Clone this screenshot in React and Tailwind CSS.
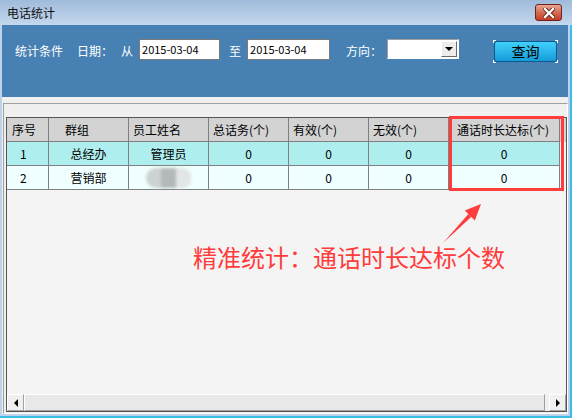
import React from 'react';

const cols = [
  { w: 'w-[42px]', title: '序号', hp: 'pl-[5px]' },
  { w: 'w-[80px]', title: '群组', hp: 'pl-[16px]' },
  { w: 'w-[80px]', title: '员工姓名', hp: 'pl-[4px]' },
  { w: 'w-[80px]', title: '总话务(个)', hp: 'pl-[4px]' },
  { w: 'w-[80px]', title: '有效(个)', hp: 'pl-[4px]' },
  { w: 'w-[80px]', title: '无效(个)', hp: 'pl-[4px]' },
  { w: 'w-[111px]', title: '通话时长达标(个)', hp: 'pl-[8px]' },
];

const rows = [
  { bg: 'bg-[#afeeee]', cells: ['1', '总经办', '管理员', '0', '0', '0', '0'] },
  { bg: 'bg-[#f0ffff]', cells: ['2', '营销部', null, '0', '0', '0', '0'] },
];

const BlurName = () => (
  <div className="flex h-[20px] w-[46px] overflow-hidden rounded-full blur-[1.5px]">
    <div className="flex-1 bg-[#cdd2d2]" />
    <div className="flex-1 bg-[#b3b9b9]" />
    <div className="flex-1 bg-[#e2e6e6]" />
  </div>
);

const Field = ({ w, value }) => (
  <div className={`${w} flex h-[21px] shrink-0 items-center border border-[#7a7a7a] bg-white pl-[2px] text-[11px] leading-none text-black`}>
    {value}
  </div>
);

export default function App() {
  return (
    <div className="relative flex h-[418px] w-[572px] flex-col overflow-hidden bg-[#bcd3ea] font-['Noto_Sans_CJK_SC',sans-serif] text-[12px]">
      {/* title bar */}
      <div className="flex h-[25px] items-center justify-between bg-gradient-to-b from-[#9fbbdb] to-[#c4d8ed] pl-[7px] pr-[10px]">
        <span className="text-[12px] text-[#111]">电话统计</span>
        <div className="flex h-[17px] w-[27px] items-center justify-center rounded-[3px] border border-[#6e2218] bg-gradient-to-b from-[#e7a796] via-[#d46a52] to-[#c33c25]">
          <svg width="12" height="10" viewBox="0 0 12 10">
            <path d="M2 1 L10 9 M10 1 L2 9" stroke="#5a1a10" strokeWidth="4" strokeLinecap="square" />
            <path d="M2 1 L10 9 M10 1 L2 9" stroke="#fff" strokeWidth="2.4" strokeLinecap="square" />
          </svg>
        </div>
      </div>

      <div className="flex flex-1 flex-col pl-[2px] pr-[4px] pb-[4px]">
        {/* query panel */}
        <div className="flex h-[72px] items-start bg-[#4781b3] pt-[14px] text-white">
          <span className="ml-[13px] mt-[3px] shrink-0">统计条件</span>
          <span className="ml-[14px] mt-[3px] shrink-0">日期：</span>
          <span className="ml-[8px] mt-[3px] shrink-0">从</span>
          <div className="ml-[6px] shrink-0"><Field w="w-[81px]" value="2015-03-04" /></div>
          <span className="ml-[9px] mt-[3px] shrink-0">至</span>
          <div className="ml-[6px] shrink-0"><Field w="w-[83px]" value="2015-03-04" /></div>
          <span className="ml-[16px] mt-[3px] shrink-0">方向：</span>
          <div className="ml-[5px] flex h-[20px] w-[72px] shrink-0 items-center justify-end border border-t-[#a0a0a0] border-l-[#a0a0a0] border-r-white border-b-white bg-white pr-[1px]">
            <div className="flex h-[16px] w-[16px] items-center justify-center border border-t-white border-l-white border-r-[#696969] border-b-[#696969] bg-[#ececec]">
              <svg width="8" height="4" viewBox="0 0 8 4"><path d="M0 0 H8 L4 4 Z" fill="#000" /></svg>
            </div>
          </div>
          <div className="relative ml-[35px] mt-[2px] flex h-[21px] w-[63px] shrink-0 items-center justify-center rounded-[3px] border border-[#0b5c8e] bg-gradient-to-b from-[#3fd1fb] to-[#159cd9] text-[14px] text-black">
            查询
            <span className="absolute -left-[2px] -top-[2px] h-[3px] w-[3px] border-l border-t border-white" />
            <span className="absolute -right-[2px] -top-[2px] h-[3px] w-[3px] border-r border-t border-white" />
            <span className="absolute -bottom-[2px] -left-[2px] h-[3px] w-[3px] border-b border-l border-white" />
            <span className="absolute -bottom-[2px] -right-[2px] h-[3px] w-[3px] border-b border-r border-white" />
          </div>
        </div>

        {/* lower area */}
        <div className="flex flex-1 flex-col bg-[#f0f0f0] pt-[6px]">
          <div className="ml-[1px] flex flex-1 flex-col border border-t-[#a0a0a0] border-l-[#a0a0a0] border-r-white border-b-white pl-[2px] pt-[13px] pb-[1px]">
            <div className="flex w-[561px] flex-1 flex-col border border-[#555] bg-[#f4f4f4]">
              <div className="flex h-[24px] bg-[#d3d3d3] text-black">
                {cols.map((c) => (
                  <div key={c.title} className={`${c.w} ${c.hp} flex shrink-0 items-center border-b border-r border-[#808080]`}>
                    {c.title}
                  </div>
                ))}
              </div>
              {rows.map((r) => (
                <div key={r.cells[0]} className="flex h-[24px] text-black">
                  {r.cells.map((v, i) => (
                    <div
                      key={i}
                      className={`${cols[i].w} ${r.bg} flex shrink-0 items-center border-b border-r border-[#808080] ${i === 0 ? 'pl-[13px]' : 'justify-center'}`}
                    >
                      {v === null ? <BlurName /> : v}
                    </div>
                  ))}
                </div>
              ))}

              {/* horizontal scrollbar */}
              <div className="mt-auto flex h-[17px] bg-[#f0f0f0]">
                <div className="flex w-[17px] items-center justify-center border border-t-white border-l-white border-r-[#a0a0a0] border-b-[#a0a0a0] bg-[#f0f0f0]">
                  <svg width="4" height="8" viewBox="0 0 4 8"><path d="M4 0 V8 L0 4 Z" fill="#000" /></svg>
                </div>
                <div className="w-[521px] border border-t-white border-l-white border-r-[#a0a0a0] border-b-[#a0a0a0] bg-[#e8e8e8]" />
                <div className="flex-1" />
                <div className="flex w-[17px] items-center justify-center border border-t-white border-l-white border-r-[#a0a0a0] border-b-[#a0a0a0] bg-[#f0f0f0]">
                  <svg width="4" height="8" viewBox="0 0 4 8"><path d="M0 0 V8 L4 4 Z" fill="#000" /></svg>
                </div>
              </div>
            </div>
          </div>
        </div>
      </div>
      <div className="absolute bottom-0 left-0 h-[2px] w-full bg-[#3cbde6]" />
      <div className="absolute right-0 top-[25px] h-full w-[2px] bg-[#3cbde6]" />

      {/* annotation overlay */}
      <div className="pointer-events-none absolute left-[449px] top-[116px] h-[75px] w-[115px] border-[3px] border-[#ff3c3c]" />
      <svg className="pointer-events-none absolute left-0 top-0" width="572" height="418">
        <polygon points="443,243 468.4,214.1 471.2,216.9" fill="#ff3c3c" />
        <polygon points="481,204 474.8,220.4 464.8,210.6" fill="#ff3c3c" />
      </svg>
      <div className="pointer-events-none absolute left-[193px] top-[245px] whitespace-nowrap text-[24px] leading-[24px] text-[#ff3c3c]">
        精准统计：通话时长达标个数
      </div>
    </div>
  );
}
